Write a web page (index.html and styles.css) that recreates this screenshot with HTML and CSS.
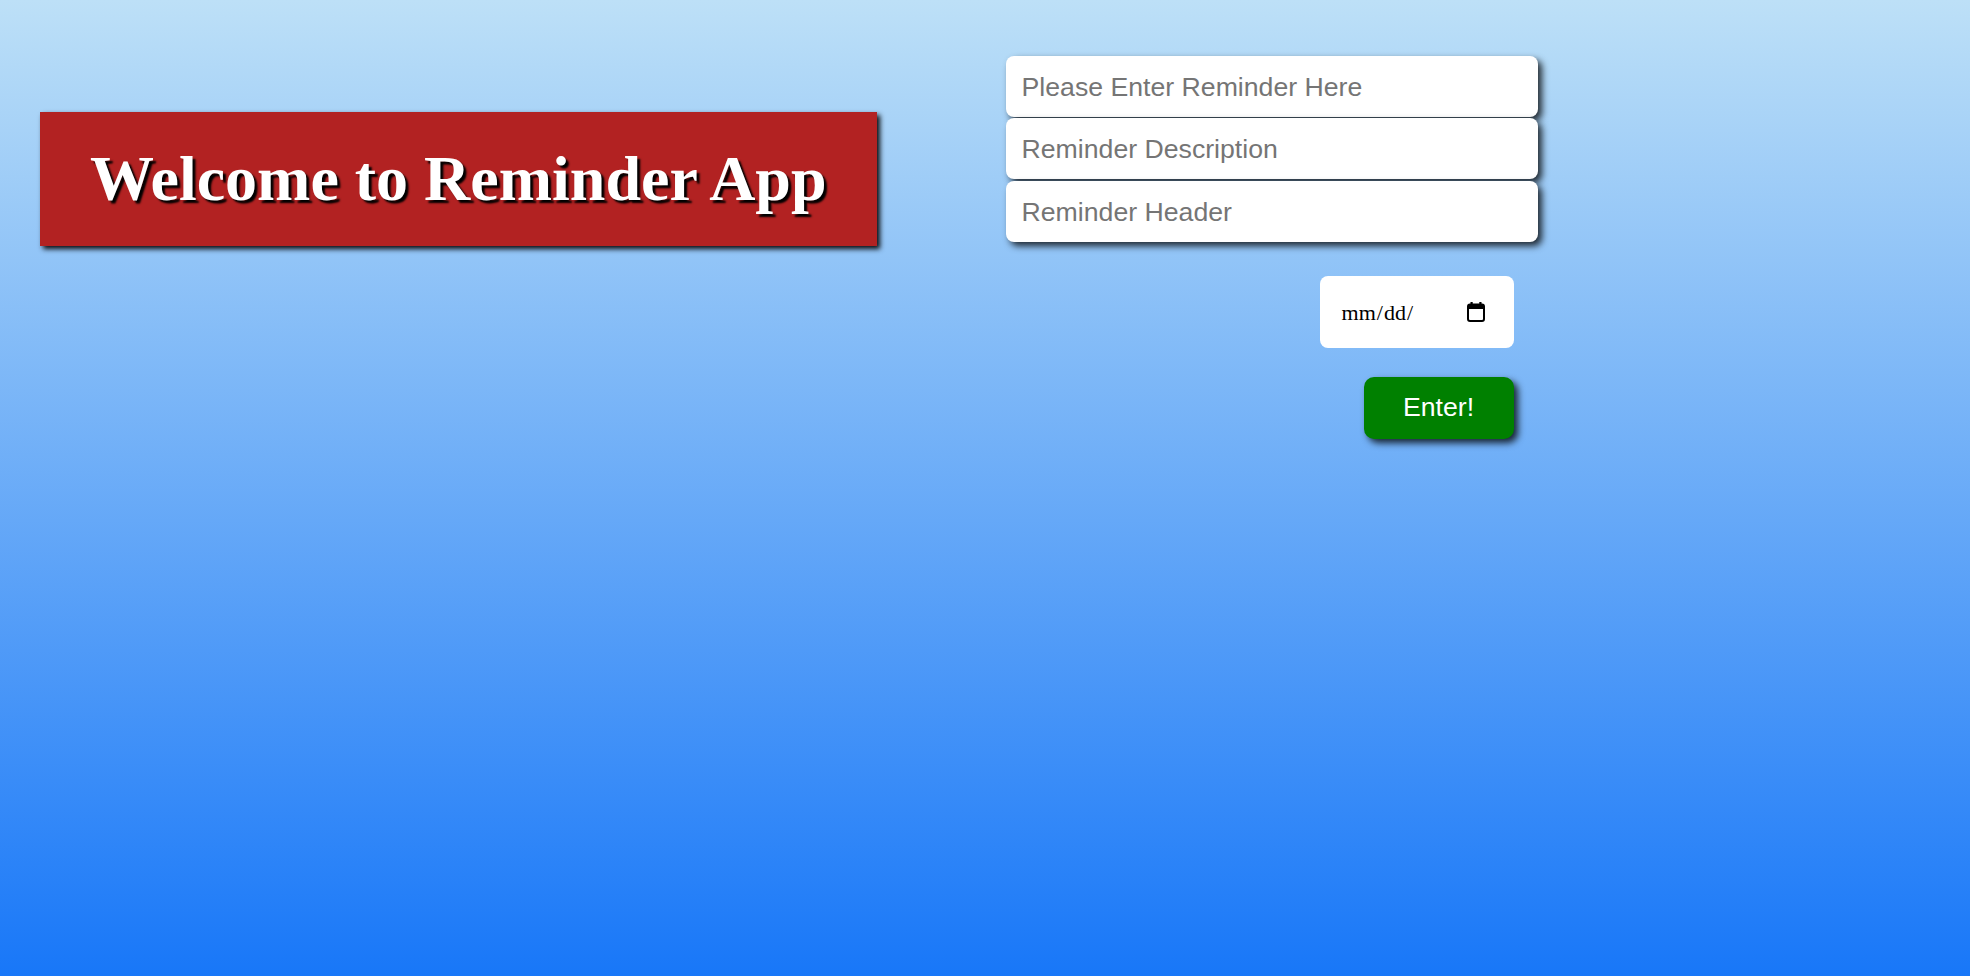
FILE: index.html
```html
<!DOCTYPE html>
<html lang="en">
<head>
<meta charset="utf-8">
<title>Reminder App</title>
<link rel="stylesheet" href="styles.css">
</head>
<body>
<div class="page">
  <header class="banner">
    <h1 class="banner-title">Welcome to Reminder App</h1>
  </header>
  <form class="reminder-form" onsubmit="return false">
    <div class="fields">
      <input class="text-field" type="text" placeholder="Please Enter Reminder Here">
      <input class="text-field" type="text" placeholder="Reminder Description">
      <input class="text-field" type="text" placeholder="Reminder Header">
    </div>
    <div class="actions">
      <div class="date-field" role="textbox" aria-label="Date">
        <span class="date-text">mm<span class="sep">/</span>dd<span class="sep">/</span></span>
        <svg class="cal-icon" width="18" height="20" viewBox="0 0 18 20" aria-hidden="true">
          <rect x="3.5" y="0" width="2.2" height="4" fill="#000"/>
          <rect x="12.3" y="0" width="2.2" height="4" fill="#000"/>
          <rect x="1" y="2.5" width="16" height="16.5" rx="2" ry="2" fill="none" stroke="#000" stroke-width="2"/>
          <rect x="1" y="2.5" width="16" height="4.5" fill="#000"/>
        </svg>
      </div>
      <button class="enter-btn" type="submit">Enter!</button>
    </div>
  </form>
</div>
</body>
</html>
```
FILE: styles.css
```css
html, body {
  margin: 0;
  padding: 0;
  height: 100%;
}

body {
  background: linear-gradient(to bottom, #bde0f7 0%, #1877f8 100%);
  font-family: "Liberation Sans", Arial, sans-serif;
  min-height: 976px;
}

.page {
  display: flex;
  align-items: flex-start;
  gap: 129px;
  padding: 56px 0 0 40px;
}

.banner {
  margin-top: 56px;
}

.banner-title {
  margin: 0;
  background: #b22222;
  color: #ffffff;
  font-family: "Liberation Serif", "Times New Roman", serif;
  font-weight: bold;
  font-size: 64px;
  line-height: 74px;
  padding: 30px 50px;
  white-space: nowrap;
  text-shadow: 3px 3px 2px #000000;
  box-shadow: 3px 3px 5px rgba(0, 0, 0, 0.95);
}

.reminder-form {
  display: flex;
  flex-direction: column;
  width: 532px;
}

.fields {
  display: flex;
  flex-direction: column;
  gap: 1.4px;
}

.text-field {
  box-sizing: border-box;
  width: 532px;
  height: 61px;
  border: none;
  border-radius: 8px;
  padding: 2px 16px 0;
  background: #ffffff;
  font-family: "Liberation Sans", Arial, sans-serif;
  font-size: 26.67px;
  color: #222;
  outline: none;
  box-shadow: 4px 4px 7px rgba(0, 0, 0, 0.8);
}

.text-field::placeholder {
  color: #757575;
}

.actions {
  display: flex;
  flex-direction: column;
  align-items: flex-end;
  margin-right: 24px;
  margin-top: 34px;
  gap: 29px;
}

.date-field {
  box-sizing: border-box;
  width: 194px;
  height: 72px;
  background: #ffffff;
  border-radius: 8px;
  display: flex;
  align-items: center;
  padding-left: 22px;
}

.date-text {
  font-family: "Liberation Serif", "Times New Roman", serif;
  font-size: 22px;
  color: #000;
  width: 125px;
  padding-top: 2px;
}

.sep {
  padding: 0 1px;
}

.cal-icon {
  display: block;
}

.enter-btn {
  width: 150px;
  height: 62px;
  border: none;
  border-radius: 10px;
  background: #008000;
  color: #ffffff;
  font-family: "Liberation Sans", Arial, sans-serif;
  font-size: 26.67px;
  box-shadow: 4px 4px 7px rgba(0, 0, 0, 0.8);
  cursor: pointer;
  padding: 0;
}
```
